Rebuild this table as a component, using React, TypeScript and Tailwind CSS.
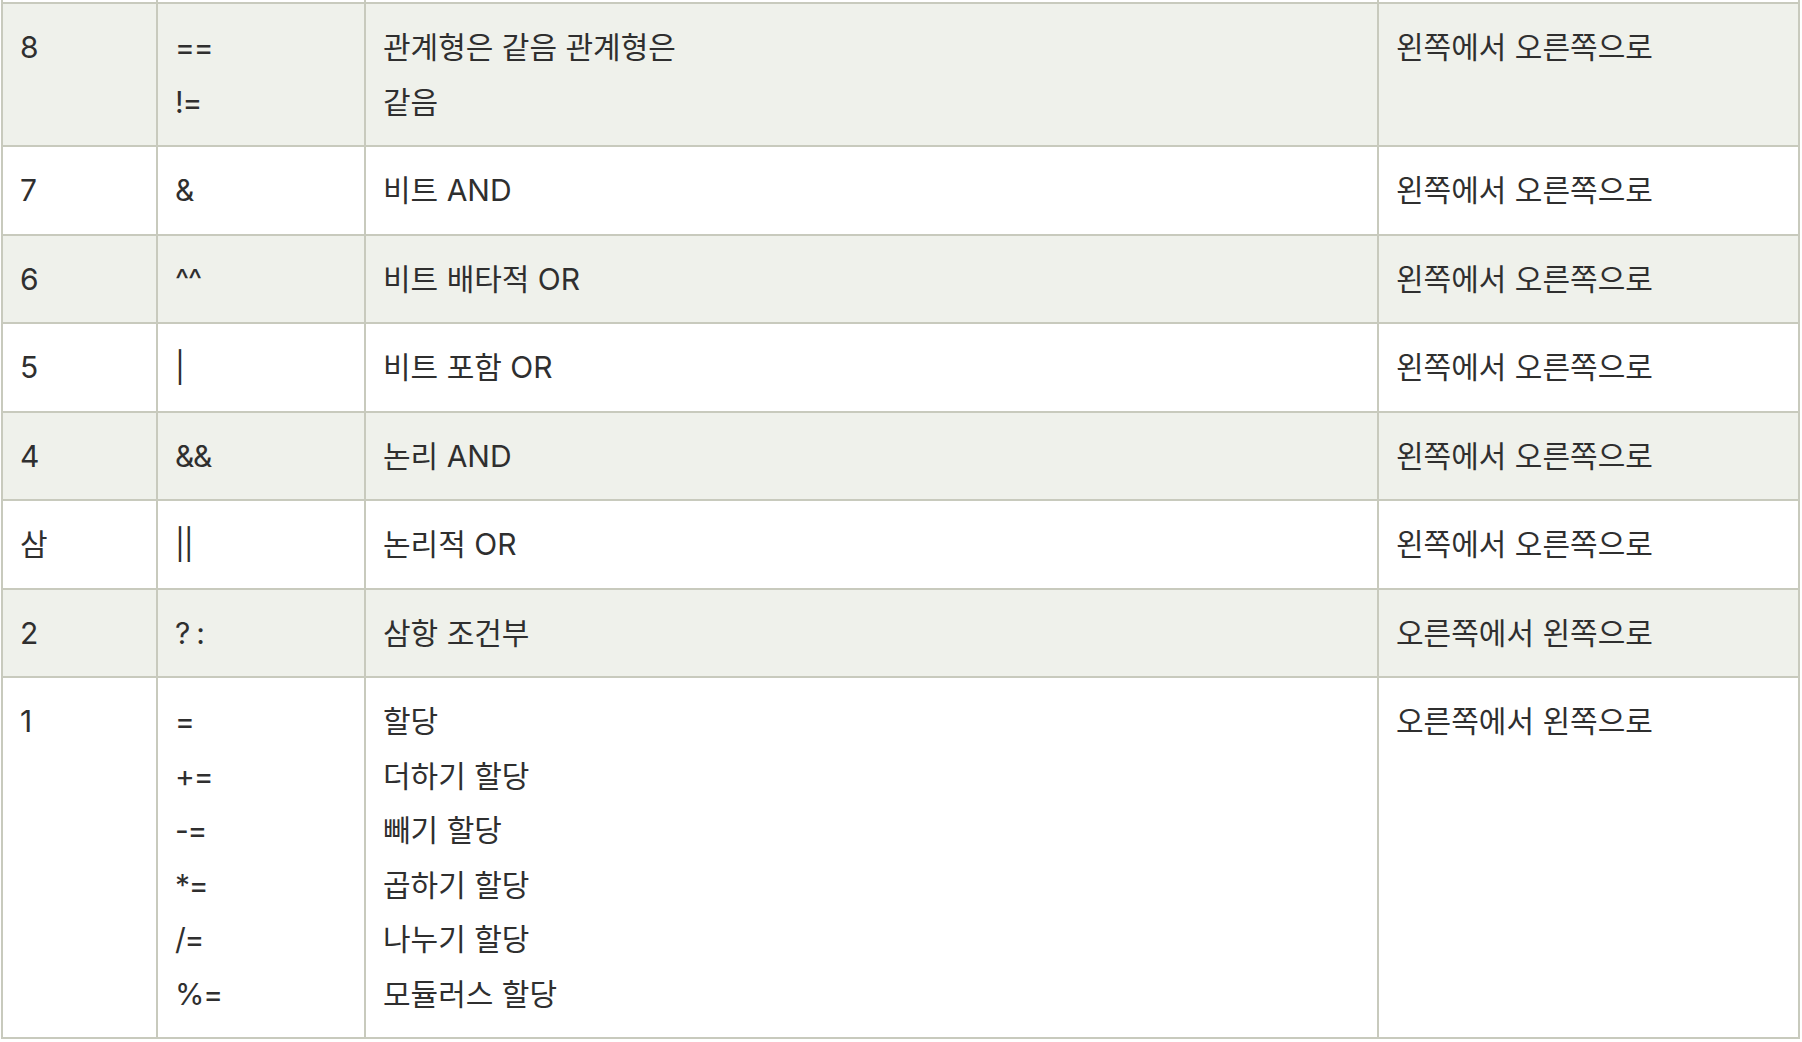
import React from "react";

type Row = { p: string; ops: string[]; desc: string[]; assoc: string; striped: boolean };

const rows: Row[] = [
  { p: "8", ops: ["==", "!="], desc: ["관계형은 같음 관계형은", "같음"], assoc: "왼쪽에서 오른쪽으로", striped: true },
  { p: "7", ops: ["&"], desc: ["비트 AND"], assoc: "왼쪽에서 오른쪽으로", striped: false },
  { p: "6", ops: ["^^"], desc: ["비트 배타적 OR"], assoc: "왼쪽에서 오른쪽으로", striped: true },
  { p: "5", ops: ["|"], desc: ["비트 포함 OR"], assoc: "왼쪽에서 오른쪽으로", striped: false },
  { p: "4", ops: ["&&"], desc: ["논리 AND"], assoc: "왼쪽에서 오른쪽으로", striped: true },
  { p: "삼", ops: ["||"], desc: ["논리적 OR"], assoc: "왼쪽에서 오른쪽으로", striped: false },
  { p: "2", ops: ["? :"], desc: ["삼항 조건부"], assoc: "오른쪽에서 왼쪽으로", striped: true },
  {
    p: "1",
    ops: ["=", "+=", "-=", "*=", "/=", "%="],
    desc: ["할당", "더하기 할당", "빼기 할당", "곱하기 할당", "나누기 할당", "모듈러스 할당"],
    assoc: "오른쪽에서 왼쪽으로",
    striped: false,
  },
];

const cell = "border-r-2 border-b-2 border-[#c8cabd] px-[17px] py-4";
const strip = "h-[4px] border-r-2 border-b-2 border-[#c8cabd] bg-white";

export default function App() {
  return (
    <div
      className="min-h-screen bg-white text-[#2f2f2f] text-[30px] leading-[54.5px]"
      style={{ fontFamily: 'Inter, "Noto Sans CJK KR", sans-serif' }}
    >
      <div className="ml-px grid grid-cols-[155px_208px_1013px_421px] border-l-2 border-[#c8cabd]">
        {/* tail of the previous row, cut off at the top */}
        <div className={strip} />
        <div className={strip} />
        <div className={strip} />
        <div className={strip} />
        {rows.map((r, i) => {
          const bg = r.striped ? "bg-[#eff1eb]" : "bg-white";
          return (
            <React.Fragment key={i}>
              <div className={`${cell} ${bg}`}>{r.p}</div>
              <div className={`${cell} ${bg} tracking-[-0.04em]`}>
                {r.ops.map((o, j) => (
                  <div key={j}>{o}</div>
                ))}
              </div>
              <div className={`${cell} ${bg}`}>
                {r.desc.map((d, j) => (
                  <div key={j}>{d}</div>
                ))}
              </div>
              <div className={`${cell} ${bg}`}>{r.assoc}</div>
            </React.Fragment>
          );
        })}
      </div>
    </div>
  );
}
